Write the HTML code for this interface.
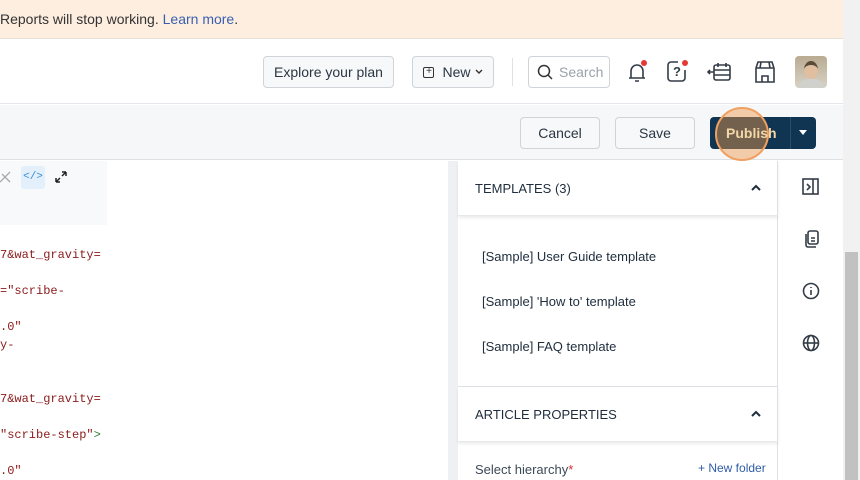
<!DOCTYPE html>
<html><head><style>
*{box-sizing:border-box;margin:0;padding:0}
body{width:860px;height:480px;overflow:hidden;font-family:"Liberation Sans",sans-serif;background:#fff;position:relative;color:#1f2d3d}
.abs{position:absolute}
.btn{position:absolute;border:1px solid #cfd4da;border-radius:4px;background:#f7f8f9;font-size:14px;color:#2b3642;display:flex;align-items:center;justify-content:center}
.code{position:absolute;left:0;font-family:"Liberation Mono",monospace;font-size:12px;color:#8b1a1a;white-space:pre}
.ico{position:absolute;stroke:#333c46;fill:none;stroke-width:1.6}
</style></head><body>
<div class="abs" style="left:0;top:0;width:843px;height:39px;background:#fdeee0;border-bottom:1px solid #e6e0da"></div>
<div class="abs" style="left:0;top:11px;font-size:14px;color:#333">Reports will stop working. <span style="color:#3a5fae">Learn more</span>.</div>
<div class="abs" style="left:0;top:40px;width:843px;height:64px;background:#fff;border-bottom:1px solid #e3e6ea"></div>
<div class="btn" style="left:263px;top:56px;width:131px;height:32px">Explore your plan</div>
<div class="btn" style="left:412px;top:56px;width:82px;height:32px"><span style="display:inline-block;width:11px;height:11px;border:1.3px solid #333;border-radius:2px;margin-right:8px;font-size:10px;line-height:8px;text-align:center">+</span>New <svg width="8" height="6" style="margin-left:4px"><path d="M1 1l3 3 3-3" stroke="#333" stroke-width="1.4" fill="none"/></svg></div>
<div class="abs" style="left:512px;top:58px;width:1px;height:28px;background:#dde1e5"></div>
<div class="btn" style="left:528px;top:56px;width:82px;height:32px;background:#fff;justify-content:flex-start;padding-left:8px;color:#9aa2ab"><svg width="16" height="16" style="margin-right:6px"><circle cx="7" cy="7" r="5.5" stroke="#333" stroke-width="1.5" fill="none"/><path d="M11 11l4 4" stroke="#333" stroke-width="1.5"/></svg>Search</div>
<svg class="ico" style="left:625px;top:60px" width="24" height="24"><path d="M6 18V11a6 6 0 0 1 12 0v7M4 18h16M10 21h4"/><circle cx="19" cy="3" r="3" fill="#e53935" stroke="none"/></svg>
<svg class="ico" style="left:664px;top:58px" width="26" height="26"><path d="M14 4H7a3 3 0 0 0-3 3v13a3 3 0 0 0 3 3h11a3 3 0 0 0 3-3v-8"/><text x="9" y="18" font-size="13" fill="#333c46" stroke="none" font-family="Liberation Sans" font-weight="bold">?</text><circle cx="21" cy="5" r="3" fill="#e53935" stroke="none"/></svg>
<svg class="ico" style="left:706px;top:60px" width="28" height="24"><rect x="8" y="5" width="16" height="15" rx="2"/><path d="M8 10h16M8 15h16M12 3v4M20 3v4M2 12h6M4 10l-2 2 2 2"/></svg>
<svg class="ico" style="left:752px;top:59px" width="26" height="26"><path d="M4 9l2-6h14l2 6M4 9v14h18V9M4 9h18M10 23v-6h6v6M9 3l-1 6M17 3l1 6"/></svg>
<div class="abs" style="left:795px;top:56px;width:32px;height:32px;border-radius:4px;background:linear-gradient(#b8ab92,#d8d2c4);overflow:hidden"><div class="abs" style="left:9px;top:5px;width:14px;height:18px;border-radius:50%;background:#e0bea0;border-top:4px solid #5a4a3a"></div><div class="abs" style="left:3px;top:23px;width:26px;height:12px;border-radius:10px 10px 0 0;background:#d0d0cc"></div></div>
<div class="abs" style="left:0;top:105px;width:843px;height:55px;background:#f5f7f9;border-bottom:1px solid #dde1e5"></div>
<div class="btn" style="left:520px;top:117px;width:80px;height:32px">Cancel</div>
<div class="btn" style="left:615px;top:117px;width:80px;height:32px">Save</div>
<div class="abs" style="left:710px;top:117px;width:106px;height:32px;background:#0f3552;border-radius:4px"></div>
<div class="abs" style="left:790px;top:117px;width:1px;height:32px;background:#2a4d68"></div>
<div class="abs" style="left:799px;top:130px;border-left:4px solid transparent;border-right:4px solid transparent;border-top:5px solid #fff"></div>
<div class="abs" style="left:715px;top:107px;width:54px;height:54px;border-radius:50%;background:rgba(240,150,70,.45);border:2px solid #f0a060"></div>
<div class="abs" style="left:726px;top:125px;font-size:14px;font-weight:bold;color:#f3d6a8">Publish</div>
<div class="abs" style="left:0;top:161px;width:107px;height:64px;background:#f8f9fa"></div>
<div class="abs" style="left:21px;top:166px;width:24px;height:23px;background:#e3f0fb;border-radius:3px;color:#3b8ed8;font-size:11px;text-align:center;line-height:23px;font-family:'Liberation Mono',monospace">&lt;/&gt;</div>
<svg class="abs" style="left:0;top:170px" width="12" height="14"><path d="M0 12L10 2M2 4l8 8" stroke="#aaa" stroke-width="1.3"/></svg>
<svg class="abs" style="left:53px;top:169px" width="16" height="16"><path d="M3 13l4-4M3 13v-4M3 13h4M13 3l-4 4M13 3v4M13 3H9" stroke="#222" stroke-width="1.5" fill="none"/></svg>
<div class="code" style="top:248px">7&amp;wat_gravity=</div>
<div class="code" style="top:284px">="scribe-</div>
<div class="code" style="top:320px">.0"</div>
<div class="code" style="top:338px">y-</div>
<div class="code" style="top:392px">7&amp;wat_gravity=</div>
<div class="code" style="top:428px">"scribe-step"<span style="color:#2e7d32">&gt;</span></div>
<div class="code" style="top:464px">.0"</div>
<div class="abs" style="left:448px;top:161px;width:10px;height:319px;background:#eef0f3"></div>
<div class="abs" style="left:458px;top:161px;width:320px;height:319px;background:#fff;border-right:1px solid #dde1e5"></div>
<div class="abs" style="left:458px;top:161px;width:320px;height:55px;box-shadow:0 2px 3px rgba(0,0,0,.08);border-bottom:1px solid #e6e9ec"></div>
<div class="abs" style="left:475px;top:181px;font-size:13px;color:#1f2d3d">TEMPLATES (3)</div>
<svg class="abs" style="left:750px;top:184px" width="12" height="8"><path d="M2 6l4-4 4 4" stroke="#1f2d3d" stroke-width="2" fill="none"/></svg>
<div class="abs" style="left:482px;top:249px;font-size:13px">[Sample] User Guide template</div>
<div class="abs" style="left:482px;top:294px;font-size:13px">[Sample] 'How to' template</div>
<div class="abs" style="left:482px;top:339px;font-size:13px">[Sample] FAQ template</div>
<div class="abs" style="left:458px;top:386px;width:320px;height:1px;background:#dde1e5"></div>
<div class="abs" style="left:458px;top:387px;width:320px;height:55px;box-shadow:0 2px 3px rgba(0,0,0,.08);border-bottom:1px solid #e6e9ec"></div>
<div class="abs" style="left:475px;top:407px;font-size:13px">ARTICLE PROPERTIES</div>
<svg class="abs" style="left:750px;top:410px" width="12" height="8"><path d="M2 6l4-4 4 4" stroke="#1f2d3d" stroke-width="2" fill="none"/></svg>
<div class="abs" style="left:475px;top:462px;font-size:13px;color:#3d4a57">Select hierarchy<span style="color:#d32f2f">*</span></div>
<div class="abs" style="left:698px;top:461px;font-size:12px;color:#2f5ca8">+ New folder</div>
<svg class="ico" style="left:802px;top:178px" width="18" height="18"><rect x="1" y="1" width="15" height="15"/><path d="M11 1v15M5 6l3 3-3 3"/></svg>
<svg class="ico" style="left:802px;top:230px" width="18" height="18"><path d="M4 4v11a2 2 0 0 0 2 2h8"/><rect x="6" y="1" width="10" height="13" rx="2"/><path d="M9 8h4M9 11h4"/></svg>
<svg class="ico" style="left:802px;top:282px" width="18" height="18"><circle cx="9" cy="9" r="7.5"/><path d="M9 8v5M9 5v1"/></svg>
<svg class="ico" style="left:802px;top:334px" width="18" height="18"><circle cx="9" cy="9" r="7.5"/><ellipse cx="9" cy="9" rx="3.5" ry="7.5"/><path d="M1.5 9h15"/></svg>
<div class="abs" style="left:843px;top:0;width:17px;height:480px;background:#f1f1f1"></div>
<div class="abs" style="left:845px;top:252px;width:13px;height:228px;background:#c1c1c1"></div>
</body></html>
